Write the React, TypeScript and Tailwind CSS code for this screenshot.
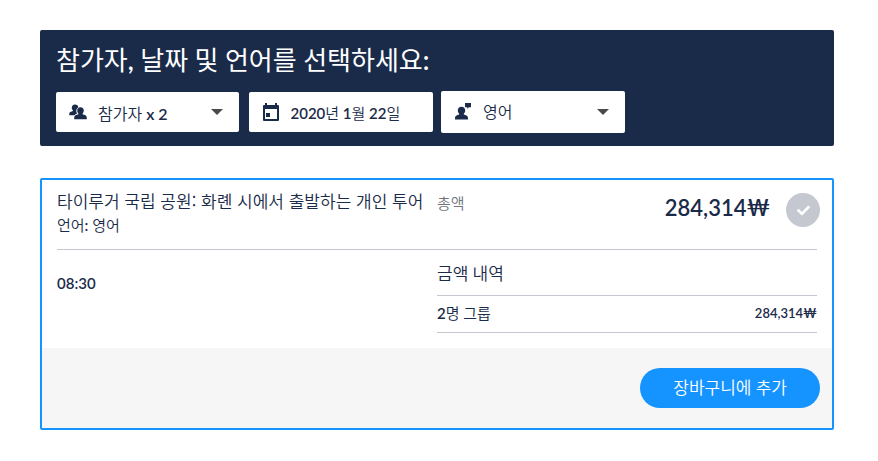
import { FaCheck } from 'react-icons/fa';

function PeopleIcon() {
	return (
		<svg className="w-[18px] h-4 shrink-0" viewBox="0 0 18 16" fill="currentColor" aria-hidden="true">
			<path d="M6 .5c2 0 3.300 1.300 3.300 3-1.500.8-2.300 2.300-1.900 4.200.1.700.4 1.300.8 1.800-1.200.4-2.200.9-2.800 1.700H.3V9.500c0-1.500 1.800-1.800 3.600-2.500v-.8c-.8-.6-1.100-1.500-1.100-2.500C2.800 1.800 4 .5 6 .5z" />
			<path d="M11.500 3.200c2.100 0 3.300 1.400 3.300 3.300 0 1.200-.4 2.200-1.200 2.900v.8c2 .7 4.200 1.100 4.200 3.200V15.200H5.200v-1.800c0-2.100 2.200-2.500 4.200-3.200v-.8c-.8-.7-1.200-1.700-1.200-2.900 0-1.900 1.200-3.300 3.300-3.300z" />
		</svg>
	);
}

function CalendarIcon() {
	return (
		<svg className="w-[18px] h-5 shrink-0" viewBox="0 0 18 20" fill="currentColor" aria-hidden="true">
			<path
				fillRule="evenodd"
				d="M3 1h2v2h8V1h2v2h1a1 1 0 011 1v14a1 1 0 01-1 1H2a1 1 0 01-1-1V4a1 1 0 011-1h1V1zm0 6v10h12V7H3z"
			/>
			<path d="M4 11h4v4H4z" />
		</svg>
	);
}

function SpeakerIcon() {
	return (
		<svg className="w-[18px] h-[18px] shrink-0" viewBox="0 0 18 18" fill="currentColor" aria-hidden="true">
			<path d="M7.500 3.800c2.300 0 3.700 1.500 3.700 3.700 0 1.400-.5 2.500-1.400 3.200v.8c2.300.7 4.200 1.300 4.200 3.400v1.600H1v-1.600c0-2.100 1.900-2.700 4.200-3.400v-.8c-.9-.7-1.400-1.800-1.400-3.200 0-2.200 1.400-3.700 3.700-3.700z" />
			<path d="M11 0h6v4.200h-2l-1.700 1.600V4.200H11z" />
		</svg>
	);
}

function Caret() {
	return (
		<svg className="w-3 h-[6px] shrink-0 text-[#4a4a4a] pointer-events-none" viewBox="0 0 12 6" fill="currentColor" aria-hidden="true">
			<path d="M0 0h12L6 6z" />
		</svg>
	);
}

export default function App() {
	return (
		<main className="pl-10 pr-11 py-[30px] font-['Lato_Semibold',Lato,'Noto_Sans_CJK_KR',sans-serif] text-[#1a2b49]" lang="ko">
			<section className="px-4 pt-3 pb-[13px] rounded-xs bg-[#1a2b49]">
				<h1 className="text-[26px] leading-9 text-white">
					참가자, 날짜 및 언어를 선택하세요:
				</h1>
				<div className="grid grid-cols-4 items-center gap-2 mt-[13px]">
					<div className="flex items-center h-10 pl-[13px] pr-4 mr-0.5 rounded-xs bg-white">
						<PeopleIcon />
						<select
							aria-label="참가자"
							className="flex-grow min-w-0 h-full pt-1 ml-[11px] appearance-none bg-transparent text-base font-[350] focus:outline-none"
						>
							<option>참가자 x 2</option>
							<option>참가자 x 3</option>
						</select>
						<Caret />
					</div>
					<div className="flex items-center h-10 px-[13px] rounded-xs bg-white">
						<CalendarIcon />
						<input
							type="text"
							aria-label="날짜"
							defaultValue="2020년 1월 22일"
							className="flex-grow min-w-0 h-full ml-[11px] bg-transparent text-[15px] font-[350] focus:outline-none"
						/>
					</div>
					<div className="flex items-center h-[42px] pl-[13px] pr-4 mr-px rounded-xs bg-white">
						<SpeakerIcon />
						<select
							aria-label="언어"
							className="flex-grow min-w-0 h-full ml-[11px] appearance-none bg-transparent text-base font-[350] focus:outline-none"
						>
							<option>영어</option>
							<option>한국어</option>
						</select>
						<Caret />
					</div>
				</div>
			</section>

			<section className="mt-8 border-2 border-[#1593ff] rounded-xs">
				<div className="px-[15px] pb-[15px]">
					<div className="grid grid-cols-2 h-[70px] pt-2 border-b border-[#c5c8d0]">
						<div>
							<h2 className="font-['Noto_Sans_CJK_KR',sans-serif] text-[17px] leading-[26px] font-[350] whitespace-nowrap">
								타이루거 국립 공원: 화롄 시에서 출발하는 개인 투어
							</h2>
							<p className="text-[15px] leading-[22px] font-[350]">언어: 영어</p>
						</div>
						<div className="flex items-start -mr-[3px]">
							<span className="pt-[3px] text-[15px] leading-6 font-[350] text-[#72747d]">총액</span>
							<strong className="ml-auto mr-4 text-[22px] leading-10 font-semibold">284,314₩</strong>
							<label className="flex items-center justify-center w-[34px] h-[34px] mt-[5px] rounded-full bg-[#c5c8d0] text-white cursor-pointer">
								<input type="checkbox" className="sr-only" aria-label="옵션 선택" />
								<FaCheck className="w-[13px] h-[13px]" />
							</label>
						</div>
					</div>
					<div className="grid grid-cols-2">
						<p className="pt-[21px] text-[15px] leading-6 font-semibold">08:30</p>
						<table className="w-full">
							<thead>
								<tr className="h-[45px] border-b border-[#c5c8d0]">
									<th colSpan={2} className="pt-1 text-left text-[17px] leading-6 font-[350]">
										금액 내역
									</th>
								</tr>
							</thead>
							<tbody>
								<tr className="h-[37px] border-b border-[#c5c8d0]">
									<td className="pb-0.5 text-[15px] leading-6 font-[350]">2명 그룹</td>
									<td className="pb-0.5 text-right text-[13px] leading-6 font-semibold">284,314₩</td>
								</tr>
							</tbody>
						</table>
					</div>
				</div>
				<div className="flex justify-end px-3 py-5 bg-[#f6f6f6]">
					<button className="h-10 px-[33px] rounded-full bg-[#1593ff] text-[17px] font-[350] text-white">
						장바구니에 추가
					</button>
				</div>
			</section>
		</main>
	);
}
